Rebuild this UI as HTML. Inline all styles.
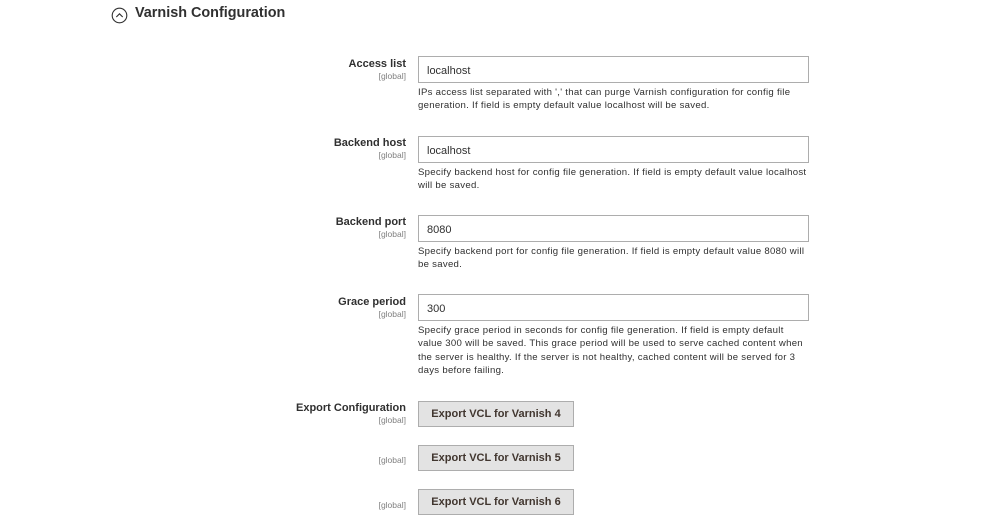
<!DOCTYPE html>
<html><head><style>
body{margin:0;width:1000px;height:520px;background:#fff;font-family:"Liberation Sans",sans-serif;color:#303030;position:relative;overflow:hidden}
.a{position:absolute}
.lbl{position:absolute;right:594px;text-align:right;font-size:11px;font-weight:bold;color:#303030;line-height:13px}
.lbl span{display:block;font-size:8.5px;font-weight:normal;color:#808080;line-height:11px}
.g{position:absolute;right:594px;font-size:8.5px;color:#808080}
.in{position:absolute;left:418px;width:389px;height:25px;border:1px solid #adadad;font-size:11px;line-height:28px;text-indent:8px;color:#303030}
.h{position:absolute;left:418px;width:400px;font-size:9.6px;letter-spacing:0.28px;line-height:13.4px;color:#303030;white-space:nowrap}
.b{position:absolute;left:418px;width:154px;height:24px;background:#e3e3e3;border:1px solid #adadad;font-size:11px;font-weight:bold;line-height:24px;text-align:center;color:#41362f}
</style></head><body>
<svg class="a" style="left:111px;top:7px" width="17" height="17" viewBox="0 0 17 17"><circle cx="8.5" cy="8.5" r="7.3" fill="none" stroke="#303030" stroke-width="1.1"/><path d="M5.3 10 L8.5 6.8 L11.7 10" fill="none" stroke="#303030" stroke-width="1.1"/></svg>
<div class="a" style="left:135px;top:5px;font-size:14.4px;font-weight:bold;color:#303030">Varnish Configuration</div>

<div class="lbl" style="top:58px">Access list<span>[global]</span></div>
<div class="in" style="top:56px">localhost</div>
<div class="h" style="top:86px">IPs access list separated with ',' that can purge Varnish configuration for config file<br>generation. If field is empty default value localhost will be saved.</div>

<div class="lbl" style="top:137px">Backend host<span>[global]</span></div>
<div class="in" style="top:136px">localhost</div>
<div class="h" style="top:166px">Specify backend host for config file generation. If field is empty default value localhost<br>will be saved.</div>

<div class="lbl" style="top:216px">Backend port<span>[global]</span></div>
<div class="in" style="top:215px">8080</div>
<div class="h" style="top:245px">Specify backend port for config file generation. If field is empty default value 8080 will<br>be saved.</div>

<div class="lbl" style="top:296px">Grace period<span>[global]</span></div>
<div class="in" style="top:294px">300</div>
<div class="h" style="top:324px">Specify grace period in seconds for config file generation. If field is empty default<br>value 300 will be saved. This grace period will be used to serve cached content when<br>the server is healthy. If the server is not healthy, cached content will be served for 3<br>days before failing.</div>

<div class="lbl" style="top:402px">Export Configuration<span>[global]</span></div>
<div class="b" style="top:401px">Export VCL for Varnish 4</div>
<div class="g" style="top:455px">[global]</div>
<div class="b" style="top:445px">Export VCL for Varnish 5</div>
<div class="g" style="top:500px">[global]</div>
<div class="b" style="top:489px">Export VCL for Varnish 6</div>
</body></html>
